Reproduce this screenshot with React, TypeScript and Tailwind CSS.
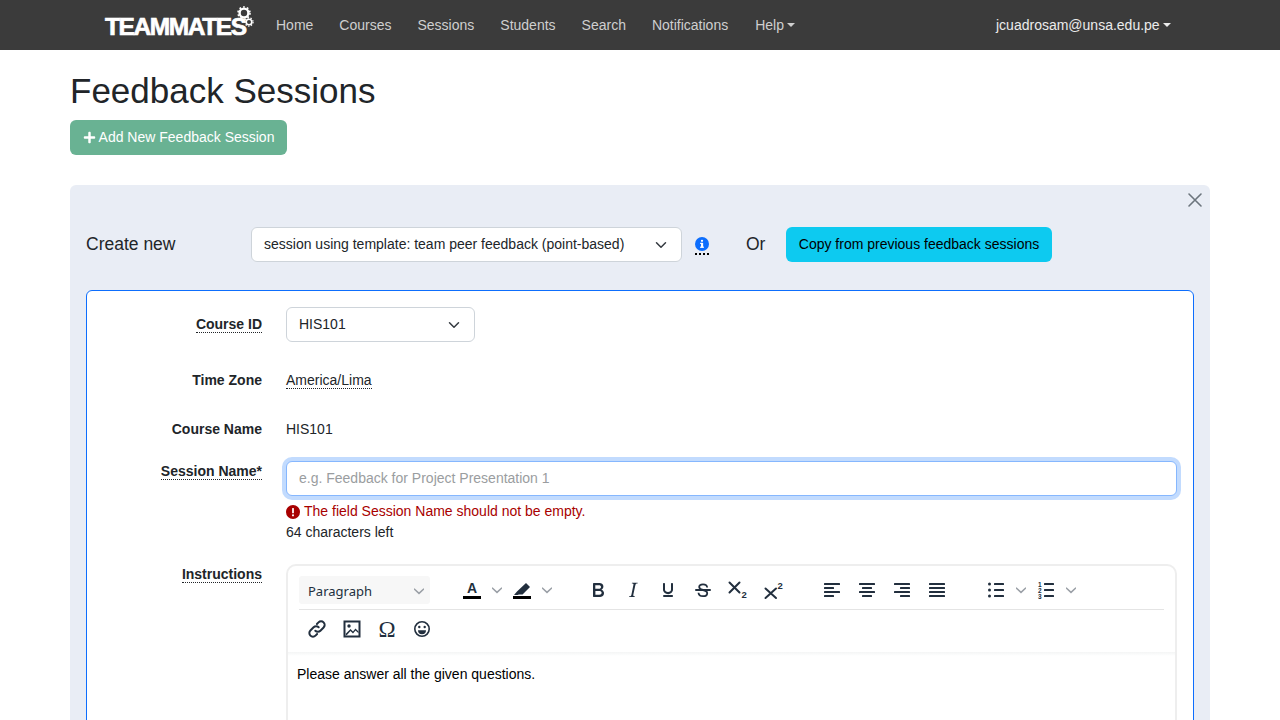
import type { ReactNode } from "react";
import { FaPlus } from "react-icons/fa";

const NAV = ["Home", "Courses", "Sessions", "Students", "Search", "Notifications"];

function Caret() {
  return <span className="ml-[3px] mb-[2px] inline-block border-x-[4px] border-t-[4px] border-x-transparent border-t-current align-middle" />;
}

function SelectChevron() {
  return (
    <svg viewBox="0 0 16 16" className="h-3 w-3 shrink-0" fill="none" stroke="#343a40" strokeWidth="2" strokeLinecap="round" strokeLinejoin="round">
      <path d="m2 5 6 6 6-6" />
    </svg>
  );
}

function Gears() {
  return (
    <svg viewBox="0 0 20 24" className="absolute left-[130px] top-[-10px] h-[24px] w-[20px]" fill="none" stroke="#fff">
      <circle cx="9" cy="8" r="4.4" strokeWidth="2.4" />
      <circle cx="9" cy="8" r="6" strokeWidth="1.6" strokeDasharray="1.8 2" />
      <circle cx="14" cy="17" r="2.8" strokeWidth="1.6" />
      <circle cx="14" cy="17" r="4.1" strokeWidth="1.2" strokeDasharray="1.4 1.5" />
    </svg>
  );
}

function Logo() {
  return (
    <div className="relative ml-[105px] mt-[3px] h-[24px] w-[148px] shrink-0">
      <span className="block text-[24.5px] font-bold leading-[24px] tracking-[-1.4px] text-white [-webkit-text-stroke:0.7px_white]">TEAMMATES</span>
      <Gears />
    </div>
  );
}

function DottedLabel({ children }: { children: ReactNode }) {
  return <span className="border-b border-dotted border-[#212529] leading-[16px] inline-block">{children}</span>;
}

function Row({ label, className, children }: { label: ReactNode; className: string; children: ReactNode }) {
  return (
    <div className={`flex ${className}`}>
      <div className="w-[175px] shrink-0 text-right font-bold">{label}</div>
      <div className="ml-[24px] min-w-0 flex-1">{children}</div>
    </div>
  );
}

function ToolIcon({ children, className = "w-[35px]" }: { children: ReactNode; className?: string }) {
  return (
    <span className={`flex h-[28px] shrink-0 items-center justify-center ${className}`}>
      <svg viewBox="0 0 24 24" className="h-6 w-6" fill="#222f3e">
        {children}
      </svg>
    </span>
  );
}

function ToolChevron() {
  return (
    <span className="flex h-[28px] w-[15px] shrink-0 items-center justify-center">
      <svg viewBox="0 0 10 10" className="h-[10px] w-[10px]" fill="none" stroke="#9a9fa6" strokeWidth="1.5">
        <path d="M0 2.8 5 7.4 10 2.8" />
      </svg>
    </span>
  );
}

function Lines({ rows }: { rows: [number, number][] }) {
  return (
    <>
      {rows.map(([x, w], i) => (
        <rect key={i} x={x} y={5 + i * 4} width={w} height="2" rx="0.5" />
      ))}
    </>
  );
}

function Toolbar() {
  return (
    <div className="px-[11px] pt-[10px] pb-[4px]">
      <div className="flex h-[34px] items-start border-b border-[#e4e4e4]">
        <div className="flex h-[28px] w-[131px] shrink-0 items-center justify-between rounded-[3px] bg-[#f7f7f7] pl-[9px] pr-[4px] pt-[2px] font-['Noto_Sans',sans-serif] text-[13px] text-[#222f3e]">
          Paragraph
          <ToolChevron />
        </div>
        <ToolIcon className="ml-[24px] w-[35px]">
          <text x="12" y="15" textAnchor="middle" fontFamily="Liberation Sans" fontWeight="700" fontSize="14">A</text>
          <rect x="3" y="18" width="18" height="3" fill="#000" />
        </ToolIcon>
        <ToolChevron />
        <ToolIcon>
          <path d="M16 5 20 9 12.5 16.5H9L7.5 17H4L7 13.5Z" />
          <rect x="3" y="18" width="18" height="3" fill="#000" />
        </ToolIcon>
        <ToolChevron />
        <ToolIcon className="ml-[26px] w-[35px]">
          <path d="M7.8 19c-.3 0-.5 0-.6-.2l-.2-.5V5.7c0-.2 0-.4.2-.5l.6-.2h5c1.5 0 2.7.3 3.5 1 .7.6 1.1 1.4 1.1 2.5a3 3 0 0 1-.6 1.9c-.4.6-1 1-1.6 1.2.4.1.9.3 1.3.6s.8.7 1 1.2c.4.4.5 1 .5 1.6 0 1.3-.4 2.3-1.3 3-.8.7-2.1 1-3.8 1H7.8zm5-8.3c.6 0 1.2-.1 1.6-.5.4-.3.6-.7.6-1.3 0-1.1-.8-1.7-2.3-1.7H9.3v3.5h3.4zm.5 6c.7 0 1.3-.1 1.7-.4.4-.4.6-.9.6-1.5s-.2-1-.7-1.4c-.4-.3-1-.4-2-.4H9.4v3.8h4z" />
        </ToolIcon>
        <ToolIcon>
          <path d="M16.7 4.7l-.1.9h-.3c-.6 0-1 0-1.4.3-.3.3-.4.6-.5 1.1l-2.1 9.8v.6c0 .5.4.8 1.4.8h.2l-.2.8H8l.2-.8h.2c1.1 0 1.8-.5 2-1.5l2-9.8.1-.5c0-.6-.4-.8-1.4-.8h-.3l.2-.9h5.8z" />
        </ToolIcon>
        <ToolIcon>
          <path d="M16 5c.6 0 1 .4 1 1v5.5a4 4 0 0 1-.4 1.8l-1 1.4a5.3 5.3 0 0 1-5.5 1 5 5 0 0 1-1.6-1c-.5-.4-.8-.9-1.1-1.4a4 4 0 0 1-.4-1.8V6c0-.6.4-1 1-1s1 .4 1 1v5.5c0 .3 0 .6.2 1l.6.7a3.3 3.3 0 0 0 2.2.8 3.4 3.4 0 0 0 2.2-.8c.3-.2.4-.5.6-.8l.2-.9V6c0-.6.4-1 1-1zM8 17h8c.6 0 1 .4 1 1s-.4 1-1 1H8a1 1 0 0 1 0-2z" />
        </ToolIcon>
        <ToolIcon>
          <rect x="4" y="11" width="16" height="2" rx="1" />
          <path d="M16.2 9.5C16 7.6 14.4 6.4 12 6.4c-2.3 0-3.8 1.1-3.8 2.7 0 1.5 1.2 2.3 3.8 2.9 2.8.6 4.2 1.5 4.2 3.2 0 1.8-1.7 3-4.2 3-2.6 0-4.4-1.3-4.5-3.4" fill="none" stroke="#222f3e" strokeWidth="1.8" />
        </ToolIcon>
        <ToolIcon>
          <path d="M3.5 4.5 13.5 14.5M13.5 4.5 3.5 14.5" fill="none" stroke="#222f3e" strokeWidth="2" strokeLinecap="round" />
          <text x="15.5" y="19.5" fontFamily="Liberation Sans" fontWeight="700" fontSize="9.5">2</text>
        </ToolIcon>
        <ToolIcon>
          <path d="M4.5 10.5 15 20M15 10.5 4.5 20" fill="none" stroke="#222f3e" strokeWidth="2" strokeLinecap="round" />
          <text x="16.5" y="10.5" fontFamily="Liberation Sans" fontWeight="700" fontSize="9.5">2</text>
        </ToolIcon>
        <ToolIcon className="ml-[24px] w-[35px]">
          <Lines rows={[[4, 16], [4, 10], [4, 16], [4, 10]]} />
        </ToolIcon>
        <ToolIcon>
          <Lines rows={[[4, 16], [7, 10], [4, 16], [7, 10]]} />
        </ToolIcon>
        <ToolIcon>
          <Lines rows={[[4, 16], [10, 10], [4, 16], [10, 10]]} />
        </ToolIcon>
        <ToolIcon>
          <Lines rows={[[4, 16], [4, 16], [4, 16], [4, 16]]} />
        </ToolIcon>
        <ToolIcon className="ml-[24px] w-[35px]">
          <circle cx="5.5" cy="6" r="1.5" />
          <circle cx="5.5" cy="12" r="1.5" />
          <circle cx="5.5" cy="18" r="1.5" />
          <rect x="10" y="5" width="10" height="2" rx="0.5" />
          <rect x="10" y="11" width="10" height="2" rx="0.5" />
          <rect x="10" y="17" width="10" height="2" rx="0.5" />
        </ToolIcon>
        <ToolChevron />
        <ToolIcon>
          <text x="4" y="8.5" fontFamily="Liberation Sans" fontWeight="700" fontSize="6.5">1</text>
          <text x="4" y="14.5" fontFamily="Liberation Sans" fontWeight="700" fontSize="6.5">2</text>
          <text x="4" y="20.5" fontFamily="Liberation Sans" fontWeight="700" fontSize="6.5">3</text>
          <rect x="10" y="5" width="10" height="2" rx="0.5" />
          <rect x="10" y="11" width="10" height="2" rx="0.5" />
          <rect x="10" y="17" width="10" height="2" rx="0.5" />
        </ToolIcon>
        <ToolChevron />
      </div>
      <div className="flex h-[38px] items-center">
        <ToolIcon>
          <path d="M10.3 13.7a3.6 3.6 0 0 0 5.1 0l3.2-3.2a3.6 3.6 0 0 0-5.1-5.1l-1.6 1.6M13.7 10.3a3.6 3.6 0 0 0-5.1 0l-3.2 3.2a3.6 3.6 0 0 0 5.1 5.1l1.6-1.6" fill="none" stroke="#222f3e" strokeWidth="2" strokeLinecap="round" />
        </ToolIcon>
        <ToolIcon>
          <path fillRule="evenodd" d="M3.5 3.5h17v17h-17Zm2 2v13h13v-13Z" />
          <circle cx="9" cy="9" r="1.7" />
          <path d="M5.5 17 10.5 12 13 14.5 15.5 11.5 18.5 14.5v1.8L15.5 13.5 13 16.5 10.5 14 6.5 18.5Z" />
        </ToolIcon>
        <ToolIcon>
          <text x="12" y="19.5" textAnchor="middle" fontFamily="Liberation Serif" fontSize="23">Ω</text>
        </ToolIcon>
        <ToolIcon>
          <circle cx="12" cy="12" r="7.2" fill="none" stroke="#222f3e" strokeWidth="1.6" />
          <circle cx="9.3" cy="10" r="1.2" />
          <circle cx="14.7" cy="10" r="1.2" />
          <path d="M8 13.2h8a4 4 0 0 1-8 0Z" />
        </ToolIcon>
      </div>
    </div>
  );
}

function Editor() {
  return (
    <div className="h-[240px] rounded-[10px] border-2 border-[#eeeeee]">
      <Toolbar />
      <div className="h-[4px] bg-gradient-to-b from-[#f4f5f5] to-white" />
      <p className="pl-[9px] pt-[8px] leading-[21px] text-black">Please answer all the given questions.</p>
    </div>
  );
}

export default function App() {
  return (
    <div className="h-screen overflow-hidden bg-white font-['Liberation_Sans',Arial,sans-serif] text-[14px] leading-[21px] text-[#212529]">
      <nav className="flex h-[50px] items-center bg-[#3b3b3b]">
        <Logo />
        <ul className="ml-[23px] flex gap-[26px] text-[#cfcfcf]">
          {NAV.map((item) => (
            <li key={item}>{item}</li>
          ))}
          <li className="ml-px">
            Help
            <Caret />
          </li>
        </ul>
        <div className="ml-[201px] text-[#ececec]">
          jcuadrosam@unsa.edu.pe
          <Caret />
        </div>
      </nav>

      <main className="mx-[70px]">
        <h1 className="mt-[20px] text-[35px] font-normal leading-[42px]">Feedback Sessions</h1>
        <button className="mt-[8px] flex h-[35px] w-[217px] items-center justify-center gap-[3px] rounded-[6px] bg-[#69b293] text-white">
          <FaPlus className="h-[13px] w-[13px]" />
          Add New Feedback Session
        </button>

        <section className="relative mt-[30px] rounded-t-[6px] bg-[#e9edf5] px-[16px] pt-[42px] pb-[20px]">
          <svg viewBox="0 0 16 16" className="absolute right-[7px] top-[7px] h-4 w-4" fill="none" stroke="#6c757d" strokeWidth="1.6" strokeLinecap="round">
            <path d="M2 2 14 14M14 2 2 14" />
          </svg>

          <div className="flex h-[35px] items-center">
            <span className="w-[165px] shrink-0 text-[17.5px]">Create new</span>
            <div className="flex h-[35px] w-[431px] shrink-0 items-center justify-between rounded-[6px] border border-[#ced4da] bg-white pl-[12px] pr-[14px]">
              session using template: team peer feedback (point-based)
              <SelectChevron />
            </div>
            <span className="ml-[13px] flex h-[20px] w-[14px] shrink-0 items-start border-b-2 border-dotted border-black">
              <svg viewBox="0 0 16 16" className="mt-[2px] h-[14px] w-[14px]">
                <circle cx="8" cy="8" r="8" fill="#0d6efd" />
                <rect x="6.9" y="6.8" width="2.4" height="5" fill="#fff" />
                <rect x="5.8" y="11" width="4.4" height="1.4" fill="#fff" />
                <rect x="5.8" y="6.6" width="3" height="1.3" fill="#fff" />
                <circle cx="8" cy="4.4" r="1.3" fill="#fff" />
              </svg>
            </span>
            <span className="ml-[37px] w-[40px] shrink-0 text-[17.5px]">Or</span>
            <button className="h-[35px] w-[266px] rounded-[6px] bg-[#0dcaf0] text-black">Copy from previous feedback sessions</button>
          </div>

          <div className="mt-[28px] h-[600px] rounded-[6px] border border-[#0d6efd] bg-white pt-[16px] pr-[16px]">
            <Row label={<span className="inline-block pt-[7px]"><DottedLabel>Course ID</DottedLabel></span>} className="">
              <div className="flex h-[35px] w-[189px] items-center justify-between rounded-[6px] border border-[#ced4da] bg-white pl-[12px] pr-[14px]">
                HIS101
                <SelectChevron />
              </div>
            </Row>
            <Row label="Time Zone" className="mt-[28px]">
              <DottedLabel>America/Lima</DottedLabel>
            </Row>
            <Row label="Course Name" className="mt-[28px]">
              HIS101
            </Row>
            <Row label={<DottedLabel>Session Name*</DottedLabel>} className="mt-[21px]">
              <input
                readOnly
                placeholder="e.g. Feedback for Project Presentation 1"
                className="block h-[35px] w-full rounded-[6px] border border-[#86b7fe] bg-white px-[12px] pb-px shadow-[0_0_0_4px_rgba(13,110,253,0.25)] outline-none placeholder:text-[#9a9da0]"
              />
              <div className="mt-[5px] flex items-center gap-[4px] text-[#a80000]">
                <svg viewBox="0 0 16 16" className="h-[14px] w-[14px] shrink-0">
                  <circle cx="8" cy="8" r="8" fill="#a80000" />
                  <rect x="7" y="3.4" width="2" height="6" rx="0.6" fill="#fff" />
                  <circle cx="8" cy="11.8" r="1.2" fill="#fff" />
                </svg>
                The field Session Name should not be empty.
              </div>
              <div>64 characters left</div>
            </Row>
            <Row label={<DottedLabel>Instructions</DottedLabel>} className="mt-[21px]">
              <Editor />
            </Row>
          </div>
        </section>
      </main>
    </div>
  );
}
